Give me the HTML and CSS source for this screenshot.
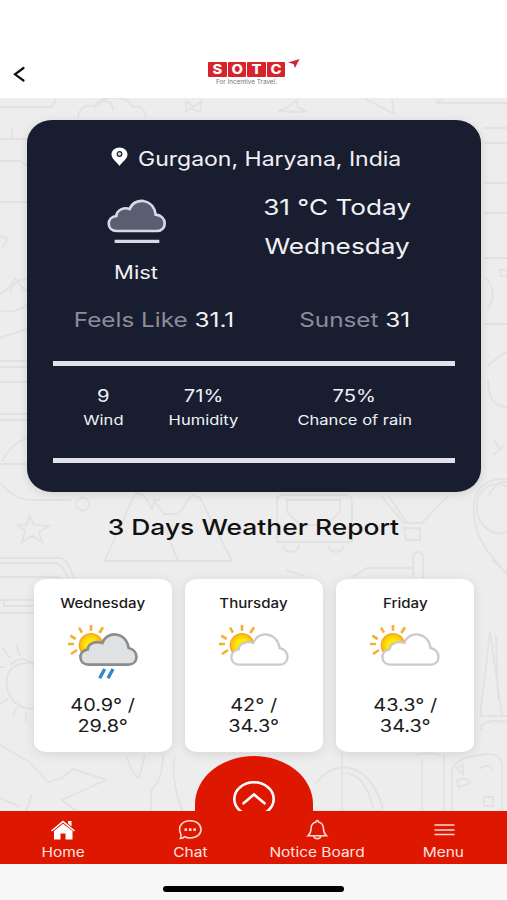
FILE: index.html
```html
<!DOCTYPE html>
<html lang="en">
<head>
<meta charset="utf-8">
<meta name="viewport" content="width=device-width, initial-scale=1">
<title>Weather</title>
<link rel="stylesheet" href="styles.css">
</head>
<body>
<svg class="defs" aria-hidden="true">
  <defs>
    <radialGradient id="sunfill"><stop offset="0.5" stop-color="#ffe900"/><stop offset="1" stop-color="#fbb616"/></radialGradient>
    <g id="sun">
      <circle cx="195" cy="226" r="35" fill="url(#sunfill)" stroke="#f6a71c" stroke-width="4"/>
      <path d="M195 182V165M220 189L231 172M168 188L159 173M149 207L133 197M144 222H125M153 240L135 252" fill="none" stroke="#f2b22f" stroke-width="8"/>
    </g>
    <path id="cloud" d="M188 284C158 284 153 244 185 238C187 218 211 213 229 219C240 183 300 182 308 234C340 241 339 284 306 284Z"/>
  </defs>
</svg>
<div class="screen">
  <header class="header">
    <svg class="back" viewBox="0 0 14 18"><path d="M10.500 3L2 9.300L10.500 15.500"/></svg>
    <div class="logo">
      <div class="logo-row">
        <b><i>S</i></b><b><i>O</i></b><b><i>T</i></b><b><i>C</i></b>
        <svg class="plane" viewBox="0 0 12 10"><path d="M0 3.500L11.500 0L7 9L5.500 5Z"/></svg>
      </div>
      <div class="tagline">For Incentive Travel.</div>
    </div>
  </header>

  <main class="main">
    <svg class="doodles" viewBox="0 98 507 713" aria-hidden="true">
      <path d="M0 107H52L56 99M78 119C78 108 86 103 95 107C98 94 130 94 132 107C142 104 147 113 145 118M98 107C102 98 112 99 113 110M186 101L194 107L202 101L200 112L190 108L186 112ZM278 111L288 107L297 100L298 108L307 111L296 112ZM366 99L394 114L392 99M436 103L443 99M436 103H507"/>
      <path d="M0 139H27M12 127V138M0 161H20L27 166M0 202H27M0 236L8 239L2 247M10 292C12 283 20 278 27 280M0 294Q10 289 15 278Q22 288 27 292M0 310Q12 315 27 305M0 338Q12 334 27 329M0 361H27M0 367H27M0 382H27M0 414H27M0 420H27M2 462Q9 445 27 438M0 464H27"/>
      <path d="M484 128H507M484 143H507M484 183H507M484 213H507M484 258H507M500 270H507V276H501ZM486 278Q499 292 487 310M484 324H507M488 365Q505 352 507 352M488 380Q488 407 507 407M494 440L500 450M493 455L505 445M489 495Q497 480 507 482"/>
      <path d="M0 482Q14 500 32 500H71M76 504a6 6 0 1 0 13 0a6 6 0 1 0 -13 0M29 516L34 525L49 526L39 532L42 542L32 536L22 542L25 531L18 525L27 524ZM104 562L134 496Q139 490 146 498L152 509L155 500H160M177 561H104M165 528L178 561H232L200 498L192 495L178 514H164L153 499M277 500Q277 495 283 495H345Q352 495 352 502V542H277V500M287 512V500H340V512L326 525H300ZM283 545a8 7 0 1 0 16 0M328 545a8 7 0 1 0 16 0M381 496L404 523H422L448 496M388 495L407 523M404 528H420V540H406Z"/>
      <path d="M474 516C470 475 507 478 507 480M507 486C478 476 469 510 484 526C496 538 507 532 507 532M474 516C478 550 500 562 505 573M0 558H60Q67 558 74 578M0 563H54Q64 564 68 578M0 577H57L68 583M353 577L367 568H413M413 577V556Q418 548 423 556V578M286 570L305 576M492 560L507 573"/>
      <path d="M0 600H34M4 600V606H34M0 613H34M10 665C20 655 29 660 34 665M34 709C12 709 3 690 8 674Q14 661 34 663M3 648L10 658M16 644L20 656M0 667H5M0 704L8 699M13 716L17 707M26 722V712M490 632L480 715M490 632L502 715M496 636L498 700M480 716H507M481 730Q481 718 507 722M507 565V579"/>
      <path d="M0 745L29 762L48 782L62 778L73 769L106 780L62 800L76 811M0 798L20 807M32 794L26 811M127 757Q132 775 139 778L145 755M163 755Q163 780 151 790V811M175 756Q170 775 182 811M315 784Q327 769 342 767Q370 768 382 805V811H313M342 752V811M346 773Q365 775 373 807M415 755Q426 752 441 755M422 760V811M444 755V811M452 811V770Q455 758 480 755Q501 751 502 765V811M456 768L463 765V774ZM479 769Q490 762 492 770M457 781Q466 776 470 783L459 787ZM484 797H493V806H484Z"/>
    </svg>

    <section class="today">
      <div class="place">
        <svg class="pin" viewBox="0 0 17 20"><path d="M8.500 0.500C13 .5 16.500 3.500 16.500 7.500C16.500 12 11 15 8.500 19C6 15 .5 12 .5 7.500C.5 3.500 4 .5 8.500 .5Z" fill="#fff"/><circle cx="8.500" cy="7" r="2.300" fill="#ddd" stroke="#191d30" stroke-width="1.200"/></svg>
        <span class="t place-name">Gurgaon, Haryana, India</span>
      </div>
      <div class="current">
        <div class="condition">
          <svg class="mist" viewBox="30 159 219 216">
            <path d="M80 288C50 288 47 247 79 243C80 224 103 216 119 222C132 187 190 187 197 239C233 242 232 288 201 288Z" fill="#5b5d70" stroke="#d8d9e6" stroke-width="8"/>
            <path d="M74 319H208" stroke="#d8d9e6" stroke-width="10"/>
          </svg>
          <span class="t mist-label">Mist</span>
        </div>
        <div class="now"><span class="t">31 °C Today</span><span class="t">Wednesday</span></div>
      </div>
      <div class="extra">
        <span class="t"><span class="dim">Feels Like</span> 31.1</span>
        <span class="t"><span class="dim">Sunset</span> 31</span>
      </div>
      <div class="rule"></div>
      <div class="stats">
        <div class="stat"><span class="t value">9</span><span class="t label">Wind</span></div>
        <div class="stat"><span class="t value">71%</span><span class="t label">Humidity</span></div>
        <div class="stat"><span class="t value">75%</span><span class="t label">Chance of rain</span></div>
      </div>
      <div class="rule"></div>
    </section>

    <h1 class="heading"><span class="t">3 Days Weather Report</span></h1>

    <section class="days">
      <article class="day">
        <span class="t day-name">Wednesday</span>
        <svg class="day-icon" viewBox="126 156 216 180"><use href="#sun"/><use href="#cloud" fill="#e0e1e3" stroke="#8b8c8f" stroke-width="8"/><path d="M236 297L221 325M261 297L246 325" stroke="#3385cc" stroke-width="10"/></svg>
        <span class="t temp">40.9° /<br>29.8°</span>
      </article>
      <article class="day">
        <span class="t day-name">Thursday</span>
        <svg class="day-icon" viewBox="126 156 216 180"><use href="#sun"/><use href="#cloud" fill="#fff" stroke="#cbcbcb" stroke-width="7"/></svg>
        <span class="t temp">42° /<br>34.3°</span>
      </article>
      <article class="day">
        <span class="t day-name">Friday</span>
        <svg class="day-icon" viewBox="126 156 216 180"><use href="#sun"/><use href="#cloud" fill="#fff" stroke="#cbcbcb" stroke-width="7"/></svg>
        <span class="t temp">43.3° /<br>34.3°</span>
      </article>
    </section>
    <div class="bump">
      <svg viewBox="0 0 118 55"><ellipse cx="59" cy="43" rx="19.700" ry="16.700"/><path d="M48.500 47.300L59 38.500L69.500 47.300"/></svg>
    </div>
  </main>

  <nav class="nav">
    <a class="tab"><svg viewBox="0 0 26 22"><path d="M1 11.500L13 1.500L25 11.500L24 12.500L13 3.500L2 12.500Z" fill="#fff"/><path d="M4 12L13 4.800L22.500 12V20.500H15.500V14.500H10.500V20.500H4ZM18 2H21.500V7.500L18 4.500Z" fill="#fff"/></svg><span class="t">Home</span></a>
    <a class="tab"><svg viewBox="0 0 26 22" class="line"><path d="M3.500 19.500C4.500 18 4.500 16.500 3.700 14.800C0 7 6 1.800 13 1.800C20 1.800 24 6 24 10.500C24 15 20 19 13 19C10 19 8.500 18.300 7.500 17.800C6.500 19 5 19.500 3.500 19.500Z"/><path d="M7.500 10.600h2.600M11.900 10.600h2.600M16.300 10.600h2.600" stroke-width="2.800"/></svg><span class="t">Chat</span></a>
    <a class="tab"><svg viewBox="0 0 26 22" class="line"><path d="M12 3C12 1 14.500 1 14.500 3C18.500 4 19.500 7 19.500 10C19.500 13 20.500 15 22.500 16.800H4C6 15 7 13 7 10C7 7 8 4 12 3ZM9.800 17C10 20.500 16.500 20.500 16.800 17"/></svg><span class="t">Notice Board</span></a>
    <a class="tab"><svg viewBox="0 0 26 22" class="line"><path d="M3.500 6H23.500M3.500 11H23.500M3.500 15.500H23.500"/></svg><span class="t">Menu</span></a>
  </nav>
  <footer class="home-area"><div class="indicator"></div></footer>
</div>
</body>
</html>
```
FILE: styles.css
```css
* { box-sizing: border-box; }
body { margin: 0; font-family: Inter, "Liberation Sans", sans-serif; }
svg { display: block; flex: none; }
.defs { position: absolute; width: 0; height: 0; }
.screen { width: 507px; height: 900px; display: flex; flex-direction: column; overflow: hidden; background: #fff; }

/* Wide letterforms: text is stretched horizontally around its anchor. */
.t { display: inline-block; white-space: nowrap; transform: scaleX(var(--sx, 1.15)); }

.header { height: 98px; padding: 58px 0 0 13px; display: flex; align-items: flex-start; }
.back { width: 14px; height: 18px; margin-top: 7px; }
.back path { fill: none; stroke: #111; stroke-width: 2.2; stroke-linecap: round; }
.logo { margin-left: 181px; }
.logo-row { display: flex; gap: 1px; height: 19px; align-items: flex-end; }
.logo-row b { width: 18.5px; height: 15px; background: #d7232b; border-radius: 1px; color: #fff; font-size: 13.5px; line-height: 15px; text-align: center; }
.logo-row i { display: inline-block; font-style: normal; font-weight: 800; transform: scaleX(1.1); }
.plane { width: 12px; height: 10px; margin: 0 0 8.500px 2px; align-self: flex-end; }
.plane path { fill: #c8283c; }
.tagline { margin: 1px 0 0 8px; font-size: 5.5px; line-height: 8px; color: #777; transform: scaleX(1.16); transform-origin: left; white-space: nowrap; }

.main { height: 713px; position: relative; padding: 21.5px 27px 0; background: #ededed; overflow: hidden; }
.doodles { position: absolute; inset: 0; width: 507px; height: 713px; fill: none; stroke: #e2e2e2; stroke-width: 1.8; }
.today { position: relative; width: 454px; height: 372px; padding: 27px 26px 0; border-radius: 25px / 23px; background: #191d30; color: #f1f1f6; box-shadow: 0 2px 10px rgba(0,0,0,.12); }
.place { display: flex; height: 24px; padding-left: 58px; }
.pin { width: 17px; height: 20px; }
.place-name { margin-left: 10px; font-size: 20px; line-height: 24px; transform-origin: left; }
.current { display: grid; grid-template-columns: 167px 235px; height: 100px; margin-top: 17.5px; }
.condition, .now, .stat { display: flex; flex-direction: column; align-items: center; }
.mist { width: 73px; height: 72px; }
.mist-label { --sx: 1.22; font-size: 18px; line-height: 26px; }
.now { --sx: 1.19; font-size: 22px; line-height: 39px; }
.extra { --sx: 1.215; display: grid; grid-template-columns: 1fr 1fr; justify-items: center; margin-top: 20px; font-size: 20px; line-height: 24px; }
.dim { color: #8b8d9b; }
.rule { height: 4.5px; margin-top: 29px; background: #e2e3ea; }
.stats { display: grid; grid-template-columns: 1fr 1fr 2fr; margin-top: 18.500px; line-height: 24px; }
.value { --sx: 1.19; font-size: 17px; }
.label { --sx: 1.225; font-size: 13.500px; }
.stats + .rule { margin-top: 26px; }

.heading { --sx: 1.2; position: relative; margin: 23px 0 0; font-size: 22px; line-height: 24px; font-weight: 500; text-align: center; color: #111; }
.days { position: relative; display: grid; grid-template-columns: repeat(3, 138px); gap: 13.300px; padding-left: 6.500px; margin-top: 40px; }
.day { height: 173.5px; padding-top: 14px; display: flex; flex-direction: column; align-items: center; background: #fff; border-radius: 12px / 10px; box-shadow: 0 2px 12px rgba(0,0,0,.1); color: #1b1b1b; }
.day-name { --sx: 1.16; font-size: 13px; line-height: 20px; font-weight: 500; }
.day-icon { width: 72px; height: 60px; margin: 9px 0 0 2px; }
.temp { --sx: 1.17; margin-top: 13px; font-size: 17px; line-height: 21.300px; text-align: center; }
.bump { position: absolute; left: 195px; bottom: 0; width: 118px; height: 55px; background: #dd1700; border-radius: 59px 59px 0 0 / 48px 48px 0 0; }
.bump svg { width: 118px; height: 55px; fill: none; stroke: #fff; stroke-width: 2.6; stroke-linecap: round; }

.nav { --sx: 1.19; height: 52.5px; display: grid; grid-template-columns: repeat(4, 1fr); background: #dd1700; color: #fde3e0; }
.tab { display: flex; flex-direction: column; align-items: center; padding-top: 8px; font-size: 13px; line-height: 20px; }
.tab svg { width: 26px; height: 22px; }
.tab .t { margin-top: .5px; }
.line { fill: none; stroke: #fbd8d4; stroke-width: 1.6; }
.home-area { flex: 1; padding-top: 22.500px; background: #f7f7f7; }
.indicator { width: 181px; height: 6px; margin: 0 auto; border-radius: 3px; background: #000; }
```
